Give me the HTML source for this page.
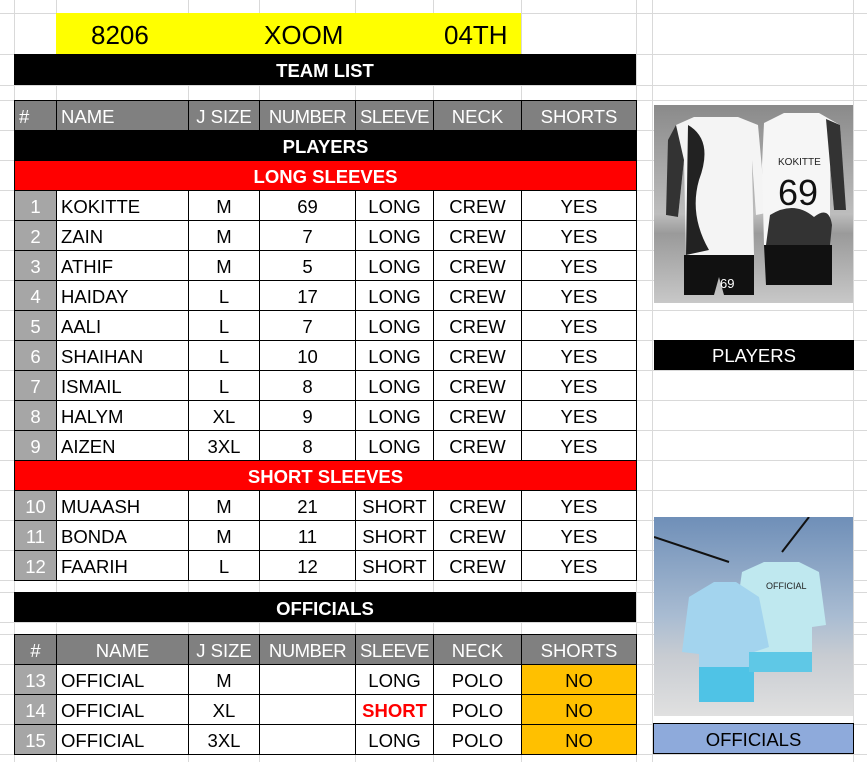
<!DOCTYPE html>
<html><head><meta charset="utf-8"><style>
*{margin:0;padding:0;box-sizing:border-box}
body{width:867px;height:762px;background:#fff;position:relative;overflow:hidden;font-family:"Liberation Sans",Arial,sans-serif;font-size:18.5px;color:#000}
.v{position:absolute;top:0;height:762px;width:1px;background:#d9d9d9}
.h{position:absolute;left:0;width:867px;height:1px;background:#d9d9d9}
.a{position:absolute}
table{position:absolute;left:14px;border-collapse:collapse;table-layout:fixed;width:623px}
td{border:1px solid #000;height:30px;padding:2px 1px 0;text-align:center;white-space:nowrap;overflow:hidden;line-height:26px}
td.n{text-align:left;padding-left:4px}
td.g{background:#a6a6a6;color:#fff}
tr.hd td{background:#808080;color:#fff}
tr.bk td{background:#000;color:#fff;font-weight:bold}
tr.rd td{background:#ff0000;color:#fff;font-weight:bold}
td.o{background:#ffc000}
.s{letter-spacing:-0.5px}
</style></head><body>
<div class="v" style="left:14px"></div><div class="v" style="left:56px"></div><div class="v" style="left:188px"></div><div class="v" style="left:259px"></div><div class="v" style="left:355px"></div><div class="v" style="left:433px"></div><div class="v" style="left:521px"></div><div class="v" style="left:636px"></div><div class="v" style="left:652px"></div><div class="v" style="left:853px"></div>
<div class="h" style="top:13px"></div><div class="h" style="top:54px"></div><div class="h" style="top:85px"></div><div class="h" style="top:100px"></div><div class="h" style="top:130px"></div><div class="h" style="top:160px"></div><div class="h" style="top:190px"></div><div class="h" style="top:220px"></div><div class="h" style="top:250px"></div><div class="h" style="top:280px"></div><div class="h" style="top:310px"></div><div class="h" style="top:340px"></div><div class="h" style="top:370px"></div><div class="h" style="top:400px"></div><div class="h" style="top:430px"></div><div class="h" style="top:460px"></div><div class="h" style="top:490px"></div><div class="h" style="top:520px"></div><div class="h" style="top:550px"></div><div class="h" style="top:580px"></div><div class="h" style="top:592px"></div><div class="h" style="top:622px"></div><div class="h" style="top:634px"></div><div class="h" style="top:664px"></div><div class="h" style="top:694px"></div><div class="h" style="top:724px"></div><div class="h" style="top:754px"></div>

<div class="a" style="left:56px;top:13px;width:465px;height:41px;background:#ffff00;font-size:26px;line-height:45px">
<span class="a" style="left:35px">8206</span><span class="a" style="left:208px">XOOM</span><span class="a" style="left:388px">04TH</span></div>
<div class="a" style="left:14px;top:54px;width:622px;height:31px;background:#000;color:#fff;font-weight:bold;text-align:center;line-height:34px">TEAM LIST</div>

<table style="top:100px">
<colgroup><col style="width:42px"><col style="width:132px"><col style="width:71px"><col style="width:96px"><col style="width:78px"><col style="width:88px"><col style="width:115px"></colgroup>
<tr class="hd"><td class="n">#</td><td class="n">NAME</td><td>J SIZE</td><td class="s">NUMBER</td><td class="s">SLEEVE</td><td>NECK</td><td>SHORTS</td></tr>
<tr class="bk"><td colspan="7">PLAYERS</td></tr>
<tr class="rd"><td colspan="7">LONG SLEEVES</td></tr>
<tr><td class="g">1</td><td class="n">KOKITTE</td><td>M</td><td>69</td><td>LONG</td><td>CREW</td><td>YES</td></tr>
<tr><td class="g">2</td><td class="n">ZAIN</td><td>M</td><td>7</td><td>LONG</td><td>CREW</td><td>YES</td></tr>
<tr><td class="g">3</td><td class="n">ATHIF</td><td>M</td><td>5</td><td>LONG</td><td>CREW</td><td>YES</td></tr>
<tr><td class="g">4</td><td class="n">HAIDAY</td><td>L</td><td>17</td><td>LONG</td><td>CREW</td><td>YES</td></tr>
<tr><td class="g">5</td><td class="n">AALI</td><td>L</td><td>7</td><td>LONG</td><td>CREW</td><td>YES</td></tr>
<tr><td class="g">6</td><td class="n">SHAIHAN</td><td>L</td><td>10</td><td>LONG</td><td>CREW</td><td>YES</td></tr>
<tr><td class="g">7</td><td class="n">ISMAIL</td><td>L</td><td>8</td><td>LONG</td><td>CREW</td><td>YES</td></tr>
<tr><td class="g">8</td><td class="n">HALYM</td><td>XL</td><td>9</td><td>LONG</td><td>CREW</td><td>YES</td></tr>
<tr><td class="g">9</td><td class="n">AIZEN</td><td>3XL</td><td>8</td><td>LONG</td><td>CREW</td><td>YES</td></tr>
<tr class="rd"><td colspan="7">SHORT SLEEVES</td></tr>
<tr><td class="g">10</td><td class="n">MUAASH</td><td>M</td><td>21</td><td>SHORT</td><td>CREW</td><td>YES</td></tr>
<tr><td class="g">11</td><td class="n">BONDA</td><td>M</td><td>11</td><td>SHORT</td><td>CREW</td><td>YES</td></tr>
<tr><td class="g">12</td><td class="n">FAARIH</td><td>L</td><td>12</td><td>SHORT</td><td>CREW</td><td>YES</td></tr>
</table>

<div class="a" style="left:14px;top:592px;width:622px;height:30px;background:#000;color:#fff;font-weight:bold;text-align:center;line-height:33px">OFFICIALS</div>

<table style="top:634px">
<colgroup><col style="width:42px"><col style="width:132px"><col style="width:71px"><col style="width:96px"><col style="width:78px"><col style="width:88px"><col style="width:115px"></colgroup>
<tr class="hd"><td>#</td><td>NAME</td><td>J SIZE</td><td class="s">NUMBER</td><td class="s">SLEEVE</td><td>NECK</td><td>SHORTS</td></tr>
<tr><td class="g">13</td><td class="n">OFFICIAL</td><td>M</td><td></td><td>LONG</td><td>POLO</td><td class="o">NO</td></tr>
<tr><td class="g">14</td><td class="n">OFFICIAL</td><td>XL</td><td></td><td style="color:#ff0000;font-weight:bold">SHORT</td><td>POLO</td><td class="o">NO</td></tr>
<tr><td class="g">15</td><td class="n">OFFICIAL</td><td>3XL</td><td></td><td>LONG</td><td>POLO</td><td class="o">NO</td></tr>
</table>

<!-- image 1 -->
<div class="a" style="left:654px;top:105px;width:199px;height:198px;background:linear-gradient(#8a8a8a,#bdbdbd 55%,#9a9a9a 65%,#c8c8c8);overflow:hidden">
<svg width="199" height="198" viewBox="0 0 199 198">
<path d="M40 12 L22 20 L12 110 L24 112 L30 55 L32 150 L100 150 L98 55 L102 110 L112 108 L104 20 L84 12 Z" fill="#f4f4f4"/>
<path d="M34 20 Q60 35 45 75 Q35 110 55 145 L32 150 Z" fill="#222"/>
<path d="M14 35 L22 20 L30 55 L24 112 L12 110 Z" fill="#333"/>
<path d="M130 8 L110 18 L108 60 L110 140 L176 140 L176 60 L180 105 L190 103 L186 20 L165 8 Z" fill="#f6f6f6"/>
<path d="M172 14 L186 20 L192 105 L180 105 Z" fill="#333"/>
<path d="M116 110 Q140 95 160 112 Q175 100 178 120 L176 140 L112 140 Z" fill="#333"/>
<text x="124" y="60" font-family="Liberation Sans" font-size="10" fill="#222">KOKITTE</text>
<text x="124" y="100" font-family="Liberation Sans" font-size="36" fill="#111">69</text>
<path d="M30 150 L100 150 L100 190 L70 190 L65 172 L60 190 L30 190 Z" fill="#111"/>
<path d="M110 140 L178 140 L178 180 L112 180 Z" fill="#111"/>
<text x="66" y="183" font-family="Liberation Sans" font-size="13" fill="#fff">69</text>
</svg></div>
<div class="a" style="left:654px;top:340px;width:200px;height:30px;background:#000;color:#fff;text-align:center;line-height:32px">PLAYERS</div>

<!-- image 2 -->
<div class="a" style="left:654px;top:517px;width:199px;height:199px;background:linear-gradient(#6f8fb8,#a9bcd2 50%,#c8ccd2 70%,#e0e0e0);overflow:hidden">
<svg width="199" height="199" viewBox="0 0 199 199">
<line x1="0" y1="20" x2="75" y2="45" stroke="#111" stroke-width="2"/>
<line x1="155" y1="0" x2="128" y2="35" stroke="#111" stroke-width="2"/>
<path d="M110 45 L88 55 L80 110 L95 112 L95 155 L158 155 L158 110 L172 108 L165 55 L145 45 Z" fill="#bfe8ef"/>
<path d="M60 65 L35 80 L28 135 L45 137 L45 185 L100 185 L100 135 L115 130 L105 80 L82 65 Z" fill="#a3d4ee"/>
<path d="M45 150 L100 150 L100 185 L45 185 Z" fill="#4fc3e6"/>
<path d="M95 135 L158 135 L158 155 L95 155 Z" fill="#5fc8e6"/>
<text x="112" y="72" font-family="Liberation Sans" font-size="9" fill="#222">OFFICIAL</text>
</svg></div>
<div class="a" style="left:653px;top:723px;width:201px;height:31px;background:#8eaadb;border:1px solid #000;text-align:center;line-height:31px">OFFICIALS</div>
</body></html>
